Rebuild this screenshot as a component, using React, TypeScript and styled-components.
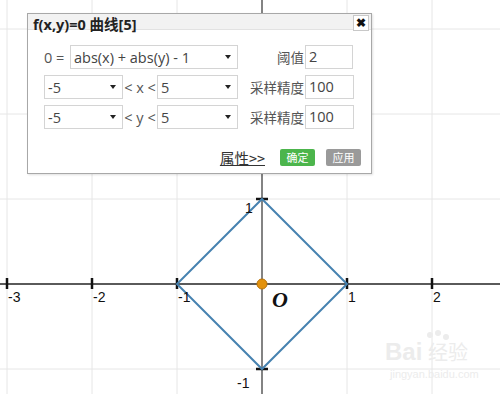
import { ReactElement } from 'react'
import styled, { createGlobalStyle } from 'styled-components'

const GlobalStyle = createGlobalStyle`
  html, body {
    margin: 0;
    padding: 0;
    background: #fff;
    overflow: hidden;
  }
`

const UNIT = 85
const OX = 262
const OY = 284

const xTicks = [-3, -2, -1, 1, 2]
const yTicks = [1, -1]
const gridX = [-3, -2, -1, 1, 2, 3]
const gridY = [3, 2, 1, -1]

const Graph = (): ReactElement => {
  const px = (v: number): number => OX + v * UNIT
  const py = (v: number): number => OY - v * UNIT
  return (
    <svg width='500' height='394' viewBox='0 0 500 394' xmlns='http://www.w3.org/2000/svg'>
      {gridX.map(v => (
        <line key={'gx' + v} x1={px(v)} y1={0} x2={px(v)} y2={394} stroke='#e6e6e6' strokeWidth='1' />
      ))}
      {gridY.map(v => (
        <line key={'gy' + v} x1={0} y1={py(v)} x2={500} y2={py(v)} stroke='#e6e6e6' strokeWidth='1' />
      ))}
      <line x1={0} y1={OY} x2={500} y2={OY} stroke='#5a5a5a' strokeWidth='2' />
      <line x1={OX} y1={0} x2={OX} y2={394} stroke='#5a5a5a' strokeWidth='1.5' />
      {xTicks.map(v => (
        <line key={'tx' + v} x1={px(v)} y1={OY - 6} x2={px(v)} y2={OY + 5} stroke='#111' strokeWidth='2.5' />
      ))}
      {yTicks.map(v => (
        <line key={'ty' + v} x1={OX - 6} y1={py(v)} x2={OX + 6} y2={py(v)} stroke='#111' strokeWidth='2.5' />
      ))}
      <polygon
        points={`${px(0)},${py(1)} ${px(1)},${py(0)} ${px(0)},${py(-1)} ${px(-1)},${py(0)}`}
        fill='none'
        stroke='#4682b0'
        strokeWidth='2'
      />
      <g fontFamily='"Liberation Sans", Arial, sans-serif' fontSize='14' fill='#111'>
        {xTicks.map(v => (
          <text key={'lx' + v} x={px(v) + 1} y={OY + 18}>{v}</text>
        ))}
        <text x={OX - 17} y={py(1) + 14}>1</text>
        <text x={OX - 25} y={py(-1) + 19}>-1</text>
      </g>
      <circle cx={OX} cy={OY} r='5' fill='#e3920d' stroke='#b8730a' strokeWidth='1' />
      <text x={OX + 10} y={OY + 23} fontFamily='"Liberation Serif", serif' fontSize='22' fontWeight='bold' fontStyle='italic' fill='#111'>O</text>
      <g fill='#ececec' fontFamily='"Liberation Sans", Arial, sans-serif'>
        <text x={385} y={360} fontSize='24' fontWeight='bold'>Bai</text>
        <text x={428} y={360} fontSize='20' fontFamily='"Noto Sans CJK SC", sans-serif'>经验</text>
        <circle cx={430} cy={335} r='3' />
        <circle cx={438} cy={333} r='3' />
        <circle cx={446} cy={337} r='3' />
        <text x={390} y={378} fontSize='11'>jingyan.baidu.com</text>
      </g>
    </svg>
  )
}

const FieldSelect = ({ value, width }: { value: string, width: number }): ReactElement => (
  <Select $width={width}>
    <span>{value}</span>
    <Arrow />
  </Select>
)

export default function App (): ReactElement {
  return (
    <Page>
      <GlobalStyle />
      <Graph />
      <Dialog>
        <TitleBar>
          <Title>f(x,y)=0 曲线[5]</Title>
          <Close>✖</Close>
        </TitleBar>
        <Body>
          <Row>
            <Label $width={26}>0 =</Label>
            <FieldSelect value='abs(x) + abs(y) - 1' width={168} />
            <SideLabel $width={67}>阈值</SideLabel>
            <Input $width={48}>2</Input>
          </Row>
          <Row>
            <FieldSelect value='-5' width={79} />
            <Between>&lt; x &lt;</Between>
            <FieldSelect value='5' width={81} />
            <SideLabel $width={67}>采样精度</SideLabel>
            <Input $width={49}>100</Input>
          </Row>
          <Row>
            <FieldSelect value='-5' width={79} />
            <Between>&lt; y &lt;</Between>
            <FieldSelect value='5' width={81} />
            <SideLabel $width={67}>采样精度</SideLabel>
            <Input $width={49}>100</Input>
          </Row>
        </Body>
        <Footer>
          <Link>属性&gt;&gt;</Link>
          <Button $color='#4cb54c'>确定</Button>
          <Button $color='#9a9a9a'>应用</Button>
        </Footer>
      </Dialog>
    </Page>
  )
}

const Page = styled.div`
  position: relative;
  width: 500px;
  height: 394px;
  overflow: hidden;
  font-family: "Open Sans", "Noto Sans", "Noto Sans CJK SC", sans-serif;
  svg { display: block; }
`
const Dialog = styled.div`
  position: absolute;
  left: 27px;
  top: 13px;
  width: 343px;
  height: 159px;
  background: #fff;
  border: 1px solid #a8a8a8;
  box-shadow: 1px 1px 2px rgba(0, 0, 0, 0.12);
  display: flex;
  flex-direction: column;
`
const TitleBar = styled.div`
  height: 15px;
  background: #f2f2f2;
  border-bottom: 1px solid #e2e2e2;
  display: flex;
  align-items: center;
  justify-content: space-between;
  padding: 0 2px 0 5px;
`
const Title = styled.div`
  font-family: "Noto Sans", "Noto Sans CJK SC", sans-serif;
  font-weight: bold;
  font-size: 14.5px;
  color: #222;
  margin-top: 3px;
`
const Close = styled.div`
  width: 14px;
  height: 14px;
  margin-top: 2px;
  border: 1px solid #c8c8c8;
  background: #fff;
  font-size: 12px;
  font-weight: bold;
  line-height: 14px;
  text-align: center;
  color: #111;
`
const Body = styled.div`
  display: flex;
  flex-direction: column;
  gap: 6px;
  padding: 15px 0 0 16px;
`
const Row = styled.div`
  display: flex;
  align-items: center;
  height: 24px;
  font-size: 14.5px;
  color: #444;
`
const Label = styled.div<{ $width: number }>`
  width: ${({ $width }) => $width}px;
  color: #555;
`
const Select = styled.div<{ $width: number }>`
  box-sizing: border-box;
  width: ${({ $width }) => $width}px;
  height: 24px;
  border: 1px solid #d4d4d4;
  display: flex;
  align-items: center;
  justify-content: space-between;
  padding: 0 6px 0 3px;
  color: #444;
  font-size: 14.5px;
`
const Arrow = styled.span`
  width: 0;
  height: 0;
  border-left: 3px solid transparent;
  border-right: 3px solid transparent;
  border-top: 4px solid #222;
`
const Between = styled.div`
  width: 34px;
  text-align: center;
  color: #555;
  white-space: pre;
`
const SideLabel = styled.div<{ $width: number }>`
  box-sizing: border-box;
  width: ${({ $width }) => $width}px;
  padding-right: 1px;
  text-align: right;
  color: #555;
  font-size: 13.5px;
  font-family: "Noto Sans CJK SC", sans-serif;
`
const Input = styled.div<{ $width: number }>`
  box-sizing: border-box;
  width: ${({ $width }) => $width}px;
  height: 24px;
  border: 1px solid #d4d4d4;
  padding: 0 3px;
  line-height: 22px;
  color: #444;
`
const Footer = styled.div`
  display: flex;
  align-items: center;
  justify-content: flex-end;
  gap: 11px;
  padding: 18px 10px 0 0;
`
const Link = styled.span`
  font-size: 14.5px;
  color: #333;
  text-decoration: underline;
  margin-right: 4px;
  font-family: "Noto Sans CJK SC", sans-serif;
`
const Button = styled.div<{ $color: string }>`
  width: 35px;
  height: 17px;
  border-radius: 2px;
  background: ${({ $color }) => $color};
  color: #fff;
  font-size: 11px;
  line-height: 17px;
  text-align: center;
  font-family: "Noto Sans CJK SC", sans-serif;
`
